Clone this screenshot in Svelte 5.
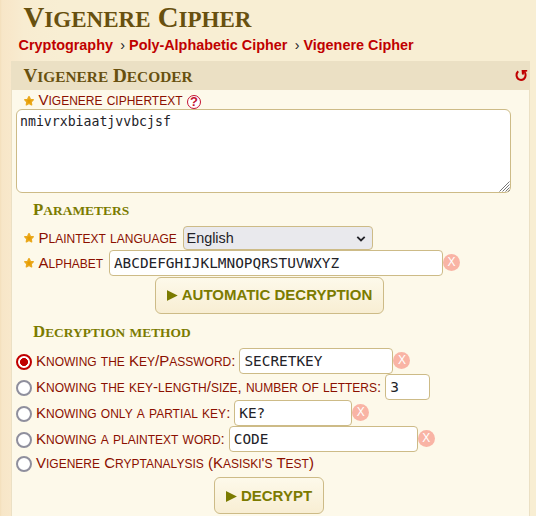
<script>
  let ciphertext = $state('nmivrxbiaatjvvbcjsf');
  let method = $state('key');
  const crumbs = ['Cryptography', 'Poly-Alphabetic Cipher', 'Vigenere Cipher'];
  const methods = [
    { id: 'key', label: 'Knowing the Key/Password:', value: 'SECRETKEY', width: 154, clear: true },
    { id: 'length', label: 'Knowing the key-length/size, number of letters:', value: '3', width: 45, clear: false },
    { id: 'partial', label: 'Knowing only a partial key:', value: 'KE?', width: 118, clear: true },
    { id: 'word', label: 'Knowing a plaintext word:', value: 'CODE', width: 189, clear: true },
    { id: 'kasiski', label: "Vigenere Cryptanalysis (Kasiski's Test)" }
  ];
  // Splits a label into runs so lowercase runs can be set as smaller capitals
  const runs = (s) => s.match(/[a-z]+|[^a-z]+/g);
</script>

{#snippet caps(text)}<span class="caps">{#each runs(text) as run}<span class:small={/[a-z]/.test(run)}>{run}</span>{/each}</span>{/snippet}

{#snippet star()}
  <svg class="star" width="12" height="12" viewBox="0 0 12 12"><path d="M6 1.7 7.3 4.4 10.2 4.8 8.1 6.9 8.6 9.8 6 8.4 3.4 9.8 3.9 6.9 1.8 4.8 4.7 4.4Z" fill="#e69d00" stroke="#eaa91f" stroke-width="1.5" stroke-linejoin="round" /></svg>
{/snippet}

<main>
  <h1>{@render caps('Vigenere Cipher')}</h1>
  <nav>
    {#each crumbs as crumb, i}
      {#if i}<span class="sep">›</span>{/if}<a href="#top">{crumb}</a>
    {/each}
  </nav>
  <section class="panel">
    <header>
      <h2>{@render caps('Vigenere Decoder')}</h2>
      <svg class="reset" width="13" height="13" viewBox="0 0 13 13"><path d="M3.2 2.2C.4 5 1.2 10.9 6 10.9S11.4 5.6 9.6 3" fill="none" stroke="#c00000" stroke-width="2" /><path d="M6.6 1H12.2V2.4L9.4 2.9 8.4 6 6.9 5.2Z" fill="#c00000" /></svg>
    </header>
    <div class="body">
      <div class="row first">
        {@render star()}<label for="cipher">{@render caps('Vigenere ciphertext')}</label>
        <span class="help">?</span>
      </div>
      <div class="area">
        <textarea id="cipher" bind:value={ciphertext} spellcheck="false"></textarea>
        <svg class="grip" width="11" height="11" viewBox="0 0 11 11"><path d="M.5 10.5 10.5.5M3.5 10.5 10.5 3.5M6.5 10.5 10.5 6.5M9 10.8 10.8 9" stroke="#777" stroke-width="1" /></svg>
      </div>
      <h3 class="params">{@render caps('Parameters')}</h3>
      <div class="row lang">
        {@render star()}<label for="lang">{@render caps('Plaintext language')}</label>
        <div class="select">
          <select id="lang"><option>English</option></select>
          <svg class="chev" width="10" height="8" viewBox="0 0 10 8"><path d="M1.3 1.8 5 5.5 8.7 1.8" fill="none" stroke="#222228" stroke-width="1.8" /></svg>
        </div>
      </div>
      <div class="row alpha">
        {@render star()}<label for="alpha">{@render caps('Alphabet')}</label>
        <input id="alpha" type="text" value="ABCDEFGHIJKLMNOPQRSTUVWXYZ" style:width="334px" />
        <span class="clear">X</span>
      </div>
      <div class="actions one"><button><i></i>AUTOMATIC DECRYPTION</button></div>
      <h3 class="method">{@render caps('Decryption method')}</h3>
      {#each methods as m}
        <div class="row opt" class:last={!m.value}>
          <input type="radio" id={m.id} value={m.id} bind:group={method} />
          <label for={m.id}>{@render caps(m.label)}</label>
          {#if m.value}
            <input type="text" value={m.value} style:width="{m.width}px" />
            {#if m.clear}<span class="clear">X</span>{/if}
          {/if}
        </div>
      {/each}
      <div class="actions two"><button><i></i>DECRYPT</button></div>
    </div>
  </section>
</main>

<style>
  :global(body) { margin: 0; overflow: hidden; }
  * { box-sizing: border-box; }
  main {
    width: 536px; height: 516px; overflow: hidden; padding: 0 6px 0 11px;
    background: linear-gradient(90deg, #f3dfbb 0, #f7e6c8 2px, #f8e8cb 11px, #f8ecd1 24px, #f8eed3 60px, #f8eed3 100%);
    font-family: "Liberation Sans", Arial, sans-serif; color: #222228;
  }
  h1, h2, h3 { margin: 0; font-family: "Liberation Serif", "Times New Roman", serif; font-weight: bold; white-space: nowrap; }
  .small { font-size: .8em; text-transform: uppercase; }
  h1 { height: 36px; padding-left: 12.5px; font-size: 28.8px; line-height: 34px; color: #68500f; }
  nav { height: 25px; display: flex; align-items: center; padding: 0 0 7px 7.6px; font-size: 14.4px; white-space: nowrap; }
  nav a { color: #c00000; font-weight: bold; text-decoration: none; }
  .sep { margin: 0 4px 0 7.3px; }
  .panel { width: 519px; }
  header { height: 29px; background: #ebe0c4; display: flex; align-items: center; justify-content: space-between; padding: 0 2px 0 12.5px; }
  h2 { font-size: 19.2px; line-height: 29px; color: #68500f; }
  .reset { margin-bottom: 1px; }
  .body { height: 426px; background: #fdf9ea; border: solid #ebe0c4; border-width: 0 1px; padding-left: 4px; }
  .row { display: flex; align-items: center; font-size: 15px; color: #8b1000; white-space: nowrap; }
  .row label { display: block; line-height: 18px; }
  .star { margin: 0 3.5px 0 7px; flex: none; }
  .first { height: 19px; padding-top: 2px; }
  .help { width: 14px; height: 14px; margin: 2px 0 0 4.5px; border: 1.3px solid #c41230; border-radius: 50%; background: #fff; color: #c41230; font-size: 13px; line-height: 12px; font-weight: bold; text-align: center; }
  .area { position: relative; width: 495px; height: 84px; }
  textarea { display: block; width: 100%; height: 100%; resize: none; border: 1px solid #cdbb87; border-radius: 6px; background: #fff; padding: 4px 3px; font: 13.2px/16px "DejaVu Sans Mono", monospace; color: #222228; outline: 0; }
  .grip { position: absolute; right: 1px; bottom: 1px; }
  h3 { font-size: 16.8px; line-height: 20px; padding-left: 17px; color: #7b7b00; }
  .params { height: 33px; padding-top: 7px; }
  .lang { height: 24px; }
  .select { position: relative; width: 190px; height: 24px; margin-left: 6.3px; }
  select { display: block; appearance: none; width: 100%; height: 100%; margin: 0; border: 1px solid #cdbb87; border-radius: 4px; background: #e9e9ed; padding: 0 2.5px; font: 14.4px "Liberation Sans", sans-serif; color: #222228; }
  .chev { position: absolute; right: 7px; top: 9px; }
  input[type='text'] { height: 26px; flex: none; margin: 0 0 0 4px; border: 1px solid #cdbb87; border-radius: 4px; background: #fff; padding: 0 4px; font: 14.4px "DejaVu Sans Mono", monospace; color: #222228; outline: 0; }
  .alpha { height: 26px; }
  .alpha input[type='text'] { margin-left: 5.7px; }
  .clear { width: 17px; height: 17px; border-radius: 50%; background: #f9b4a5; color: #fff; font-size: 12px; line-height: 17px; text-align: center; margin-top: -2px; flex: none; }
  .actions { display: flex; justify-content: center; padding-right: 6px; }
  .one { padding-top: 1px; }
  .actions button { height: 37px; border: 1px solid #cdbb87; border-radius: 6px; background: linear-gradient(#fdf9ea, #f8eed3); display: flex; align-items: center; padding: 0 11px 2px; font: bold 15px "Liberation Sans", sans-serif; color: #7b7b00; white-space: nowrap; }
  .actions i { width: 11px; height: 11px; margin: 2px 4px 0 0; background: #7b7b00; clip-path: polygon(0 0, 100% 50%, 0 100%); }
  .two button { padding: 0 11px 0 11px; }
  .two { padding-right: 7px; }
  .method { height: 34px; padding-top: 8px; }
  .opt { height: 26px; }
  .opt.last { height: 25px; padding-bottom: 2px; }
  .body input[type='radio'] { appearance: none; flex: none; width: 16px; height: 16px; margin: 1px 4px 0 0; border: 2px solid #8f8f9d; border-radius: 50%; background: #fff; }
  .body input[type='radio']:checked { border-color: #c00000; background: radial-gradient(circle, #c00000 3.7px, #fff 4.3px); }
</style>
